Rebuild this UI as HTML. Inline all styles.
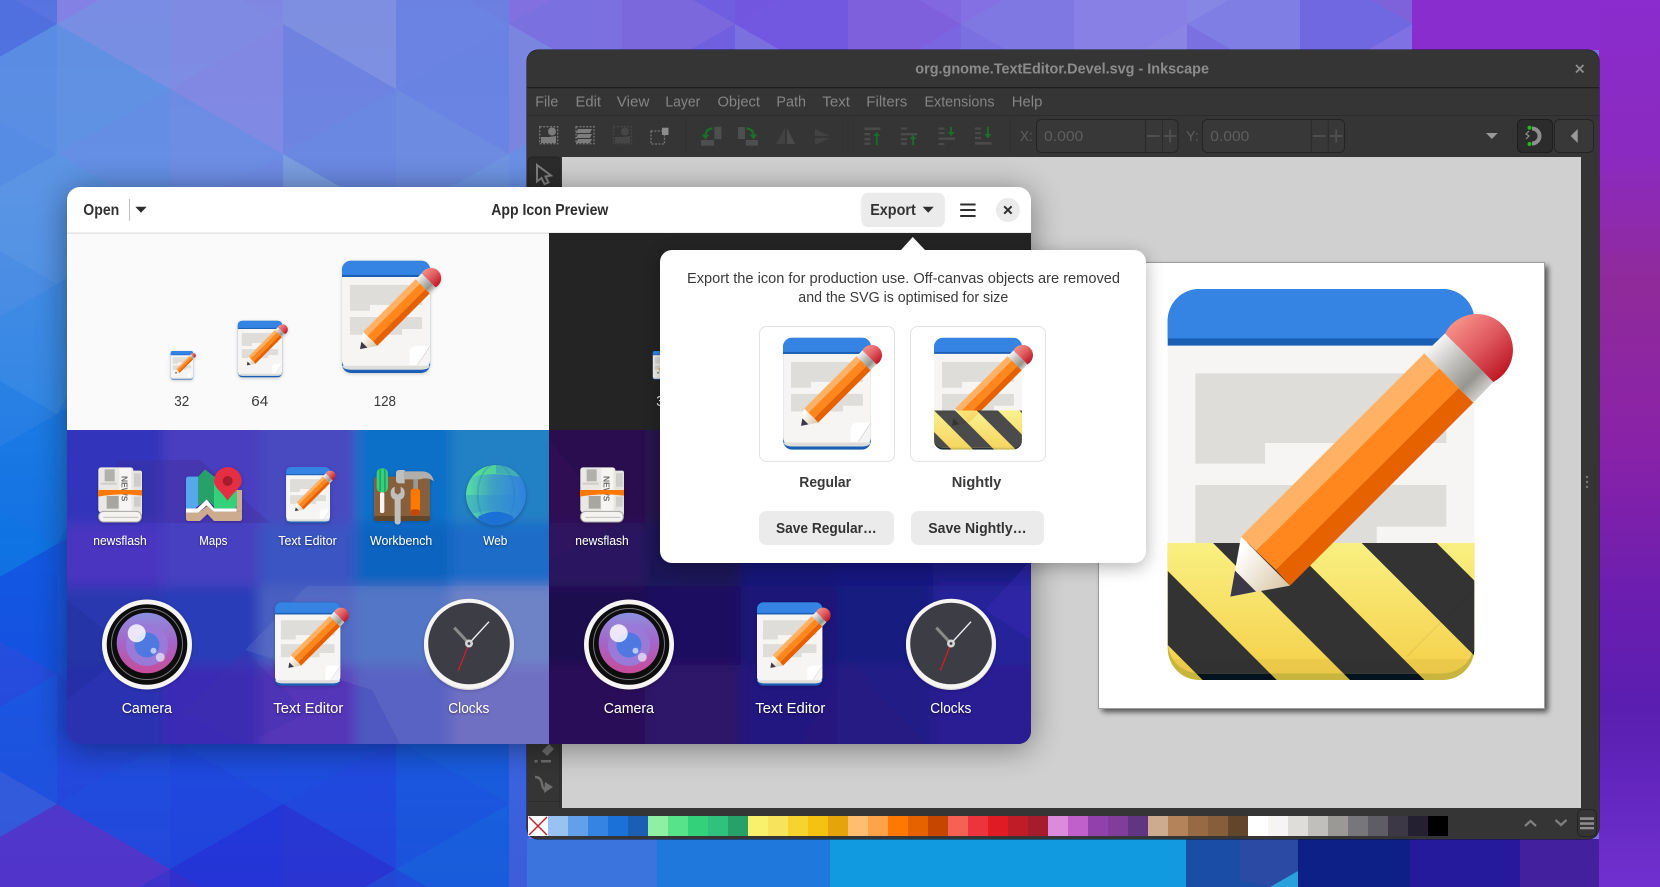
<!DOCTYPE html>
<html><head><meta charset="utf-8"><title>App Icon Preview</title>
<style>
html,body{margin:0;padding:0;width:1660px;height:887px;overflow:hidden;background:#3a60d8}
svg{display:block}
text{font-family:"Liberation Sans",sans-serif}
</style></head><body>
<svg xmlns="http://www.w3.org/2000/svg" width="1660" height="887" viewBox="0 0 1660 887">
<defs>
<filter id="b12" filterUnits="userSpaceOnUse" x="0" y="380" width="1100" height="420"><feGaussianBlur stdDeviation="6"/></filter>
<filter id="sh" x="-20%" y="-20%" width="140%" height="140%"><feGaussianBlur stdDeviation="16"/></filter>
<filter id="sh2" x="-20%" y="-20%" width="140%" height="140%"><feGaussianBlur stdDeviation="9"/></filter>
<filter id="pgs" x="-5%" y="-5%" width="110%" height="110%"><feGaussianBlur stdDeviation="3"/></filter>
<filter id="ts" x="-20%" y="-20%" width="140%" height="140%"><feDropShadow dx="0" dy="1" stdDeviation="1" flood-color="#000" flood-opacity=".45"/></filter>
<filter id="is" x="-20%" y="-20%" width="140%" height="140%"><feDropShadow dx="0" dy="1" stdDeviation="1.5" flood-color="#000" flood-opacity=".2"/></filter>
<linearGradient id="lb" x1="0" y1="0" x2="0" y2="1"><stop offset="0" stop-color="#6f84e2"/><stop offset=".2" stop-color="#6a90e4"/><stop offset=".45" stop-color="#2a82e4"/><stop offset=".6" stop-color="#1668e2"/><stop offset=".8" stop-color="#1f50e0"/><stop offset="1" stop-color="#2a3cd4"/></linearGradient>
<linearGradient id="yel" x1="0" y1="849" x2="0" y2="1240" gradientUnits="userSpaceOnUse"><stop offset="0" stop-color="#f9f082"/><stop offset="1" stop-color="#f5d04a"/></linearGradient>
<linearGradient id="era" x1="1075" y1="170" x2="1235" y2="340" gradientUnits="userSpaceOnUse"><stop offset="0" stop-color="#fb9c90"/><stop offset=".55" stop-color="#e05a60"/><stop offset="1" stop-color="#c01c28"/></linearGradient>
<linearGradient id="fer" x1="1034" y1="250" x2="1180" y2="397" gradientUnits="userSpaceOnUse"><stop offset="0" stop-color="#f6f5f4"/><stop offset=".4" stop-color="#c0bfbc"/><stop offset=".75" stop-color="#96958f"/><stop offset="1" stop-color="#d0cfcc"/></linearGradient>
<linearGradient id="wood" x1="445" y1="880" x2="590" y2="990" gradientUnits="userSpaceOnUse"><stop offset="0" stop-color="#fff"/><stop offset="1" stop-color="#d8c6a4"/></linearGradient>
<linearGradient id="rs" x1="0" y1="0" x2="0" y2="1"><stop offset="0" stop-color="#8a2cce"/><stop offset=".18" stop-color="#8b2abf"/><stop offset=".32" stop-color="#902a9a"/><stop offset=".5" stop-color="#8a22a8"/><stop offset=".68" stop-color="#6a1eb0"/><stop offset=".8" stop-color="#5a1eb0"/><stop offset="1" stop-color="#7030d0"/></linearGradient>
<linearGradient id="lens" x1="0" y1="0" x2="0" y2="1"><stop offset="0" stop-color="#8c8ee0"/><stop offset=".5" stop-color="#a565c8"/><stop offset="1" stop-color="#c84c98"/></linearGradient>
<linearGradient id="glob" x1="0" y1="0" x2="1" y2="0"><stop offset="0" stop-color="#57e0a0"/><stop offset=".45" stop-color="#3fa0c4"/><stop offset="1" stop-color="#3080e0"/></linearGradient>
<clipPath id="outerC"><path d="M233 849H1153V1165A95 95 0 0 1 1058 1260H328A95 95 0 0 1 233 1165Z"/></clipPath>
<clipPath id="innerC"><path d="M233 849H1153V1145A95 95 0 0 1 1058 1240H328A95 95 0 0 1 233 1145Z"/></clipPath>
<clipPath id="appC"><rect x="67" y="187" width="964" height="557" rx="13"/></clipPath>
<clipPath id="inkC"><rect x="527" y="50" width="1072" height="789" rx="11"/></clipPath>
<clipPath id="gl"><circle cx="1278" cy="165" r="90"/></clipPath>
<clipPath id="panL"><rect x="67" y="430" width="482" height="314"/></clipPath>
<clipPath id="panD"><rect x="549" y="430" width="482" height="314"/></clipPath>

<g id="pencil">
<polygon points="453,830 600,977 421,1010" fill="url(#wood)"/>
<polygon points="421,1010 435,932 498,995" fill="#3d3846"/>
<polygon points="453,830 1003,280 1048,325 498,873" fill="#ffb165"/>
<polygon points="498,873 1048,325 1106,384 558,930" fill="#ff871d"/>
<polygon points="558,930 1106,384 1150,428 600,977" fill="#e66100"/>
<polygon points="1003,280 1065,220 1210,366 1150,428" fill="url(#fer)"/>
<path d="M1065 220A108 108 0 1 1 1210 366Z" fill="url(#era)"/>
</g>
<g id="docTop">
<path d="M233 257V182A95 95 0 0 1 328 87H1058A95 95 0 0 1 1153 182V257Z" fill="#1a5fb4"/>
<path d="M233 235V182A95 95 0 0 1 328 87H1058A95 95 0 0 1 1153 182V235Z" fill="#3584e4"/>
</g>
<g id="greys" fill="#deddda">
<path d="M316 340H1069V549H525V611H316Z"/>
<path d="M316 675H1069V800H860V860H316Z"/>
</g>
<g id="docR">
<rect x="233" y="87" width="920" height="1173" rx="95" fill="#1a5fb4"/>
<path d="M233 257H1153V1130A95 95 0 0 1 1058 1225H328A95 95 0 0 1 233 1130Z" fill="#f6f5f4"/>
<path d="M236 1184H1150Q1140 1225 1058 1225H328Q246 1225 236 1184Z" fill="#deddda"/>
<use href="#docTop"/>
<use href="#greys"/>
<path d="M1153 977H1020Q940 977 940 1060V1177H1020Z" fill="#fff"/>
<path d="M1153 977L1020 1177" stroke="#cfcecb" stroke-width="7" fill="none"/>
<use href="#pencil"/>
</g>
<g id="stripesBottom">
<path d="M233 849H1153V1165A95 95 0 0 1 1058 1260H328A95 95 0 0 1 233 1165Z" fill="#c8b540"/>
<g clip-path="url(#outerC)" fill="#02121f">
<polygon points="-73,849 149,849 560,1260 338,1260"/><polygon points="369,849 592,849 1003,1260 780,1260"/><polygon points="815,849 1040,849 1451,1260 1226,1260"/>
</g>
<path d="M233 849H1153V1145A95 95 0 0 1 1058 1240H328A95 95 0 0 1 233 1145Z" fill="url(#yel)"/>
<g clip-path="url(#innerC)" fill="#333">
<polygon points="-73,849 149,849 560,1260 338,1260"/><polygon points="369,849 592,849 1003,1260 780,1260"/><polygon points="815,849 1040,849 1451,1260 1226,1260"/>
</g>
<rect x="233" y="1197" width="920" height="43" fill="#000" opacity=".04" clip-path="url(#innerC)"/>
</g>
<g id="stripesSmall">
<path d="M233 849H1153V1165A95 95 0 0 1 1058 1260H328A95 95 0 0 1 233 1165Z" fill="#c8b540"/>
<g clip-path="url(#outerC)" fill="#02121f">
<polygon points="-213,849 6,849 417,1260 198,1260"/><polygon points="233,849 452,849 863,1260 644,1260"/><polygon points="679,849 900,849 1311,1260 1090,1260"/><polygon points="1125,849 1346,849 1757,1260 1536,1260"/>
</g>
<path d="M233 849H1153V1145A95 95 0 0 1 1058 1240H328A95 95 0 0 1 233 1145Z" fill="url(#yel)"/>
<g clip-path="url(#innerC)" fill="#333">
<polygon points="-213,849 6,849 417,1260 198,1260"/><polygon points="233,849 452,849 863,1260 644,1260"/><polygon points="679,849 900,849 1311,1260 1090,1260"/><polygon points="1125,849 1346,849 1757,1260 1536,1260"/>
</g>
</g>
<g id="docNbig">
<rect x="233" y="180" width="920" height="700" fill="#f6f5f4"/>
<use href="#docTop"/>
<use href="#greys"/>
<use href="#stripesBottom"/>
<path d="M1153 985L950 1190" stroke="#000" stroke-opacity=".06" stroke-width="4" fill="none"/>
<use href="#pencil"/>
</g>
<g id="docNsmall">
<rect x="233" y="180" width="920" height="700" fill="#f6f5f4"/>
<use href="#docTop"/>
<use href="#greys"/>
<use href="#pencil"/>
<g opacity=".88"><use href="#stripesSmall"/></g>
</g>

<g id="newsflash">
<rect x="170" y="92" width="46" height="135" rx="6" fill="#e4e3df"/>
<rect x="85" y="82" width="105" height="135" rx="8" fill="#e9e8e4"/>
<rect x="148" y="84" width="36" height="130" fill="#f6f5f4"/>
<rect x="104" y="88" width="30" height="36" fill="#b2b0aa"/>
<rect x="92" y="128" width="48" height="6" fill="#cfcdc8"/>
<rect x="110" y="168" width="36" height="38" fill="#a8a6a0"/>
<rect x="192" y="100" width="20" height="40" fill="#cfcdc8"/>
<rect x="192" y="170" width="20" height="30" fill="#cfcdc8"/>
<text transform="translate(155,108) rotate(90)" font-size="24" font-weight="700" fill="#6e6d6a" textLength="76" lengthAdjust="spacingAndGlyphs">NEWS</text>
<path d="M84 150H216V167Q150 158 84 170Z" fill="#ff7800"/>
<rect x="86" y="214" width="128" height="32" rx="15" fill="#f4f3f0" stroke="#a9a7a2" stroke-width="3"/>
<path d="M100 232H205" stroke="#c0bfbc" stroke-width="3"/>
</g>
<g id="cam">
<circle cx="147" cy="644.5" r="45" fill="#f6f5f4"/>
<circle cx="147" cy="644.5" r="40.3" fill="#0c0c0e"/>
<circle cx="147" cy="644" r="35.5" fill="none" stroke="#77767b" stroke-width="1"/>
<circle cx="147" cy="643" r="30.3" fill="url(#lens)"/>
<circle cx="147" cy="645" r="21" fill="#9a7ad8"/>
<circle cx="147" cy="645" r="12.5" fill="#4f78e0"/>
<circle cx="136.7" cy="633.3" r="9" fill="#fff" opacity=".82"/>
<circle cx="153.5" cy="650.7" r="3" fill="#fff" opacity=".6"/>
<circle cx="160.3" cy="657.3" r="4.5" fill="#fff" opacity=".6"/>
</g>
<g id="clk">
<circle cx="469" cy="645" r="45" fill="#deddda"/>
<circle cx="469" cy="643.8" r="45" fill="#f6f5f4"/>
<circle cx="469" cy="643.5" r="40.8" fill="#3d3c44"/>
<path d="M469 643.5L454.3 627.7" stroke="#8a8a8a" stroke-width="3"/>
<path d="M469 643.5L489 621.7" stroke="#f0f0f0" stroke-width="1.4"/>
<path d="M469 643.5L458.3 670.7" stroke="#e01b24" stroke-width="1.2"/>
<circle cx="469" cy="643.5" r="4" fill="#d5d5d5"/><circle cx="469" cy="643.5" r="1.4" fill="#3d3c44"/>
</g>
</defs>

<!-- WALLPAPER -->
<rect width="1660" height="887" fill="#7a70e0"/>
<rect x="0" y="0" width="529" height="887" fill="url(#lb)"/>
<g shape-rendering="crispEdges" opacity=".62">
<!-- left column -->
<polygon points="57,24 57,-106 -56,-41" fill="#4a6ae0"/>
<polygon points="57,24 -56,-41 -56,89" fill="#3f64e0"/>
<polygon points="57,24 -56,89 57,154" fill="#5090e4"/>
<polygon points="57,154 -56,89 -56,219" fill="#4a8ce4"/>
<polygon points="57,154 -56,219 57,284" fill="#5598e4"/>
<polygon points="57,284 -56,219 -56,349" fill="#4a90e4"/>
<polygon points="57,284 -56,349 57,414" fill="#3a8ce4"/>
<polygon points="57,414 -56,349 -56,479" fill="#2880e4"/>
<polygon points="57,414 -56,479 57,544" fill="#1478e4"/>
<polygon points="57,544 -56,479 -56,609" fill="#0c7ce4"/>
<polygon points="57,544 -56,609 57,674" fill="#1050e2"/>
<polygon points="57,674 -56,609 -56,739" fill="#2a48dc"/>
<polygon points="57,674 -56,739 57,804" fill="#1a58e0"/>
<polygon points="57,804 -56,739 -56,869" fill="#3a68dc"/>
<polygon points="57,804 -56,869 -56,887 57,887" fill="#6a30c4"/>
<!-- 57-170 -->
<polygon points="57,24 57,-106 170,-41" fill="#9080e4"/>
<polygon points="57,24 170,-41 170,89" fill="#7f93e4"/>
<polygon points="57,24 170,89 57,154" fill="#5a96e4"/>
<polygon points="57,154 170,89 170,219" fill="#6090e4"/>
<polygon points="57,154 170,219 57,284" fill="#5598e4"/>
<polygon points="57,284 170,219 57,414" fill="#3f8ee4"/>
<polygon points="57,414 170,349 57,544" fill="#1a7ae4"/>
<polygon points="57,544 170,479 57,674" fill="#1a55e2"/>
<polygon points="57,674 170,609 170,739" fill="#2050e0"/>
<polygon points="57,674 170,739 57,804" fill="#2448dc"/>
<polygon points="57,804 170,739 170,869" fill="#1f4fdf"/>
<polygon points="57,804 170,869 138.700,887 57,887" fill="#6a30c4"/>
<polygon points="138.700,887 170,869 170,887" fill="#4a2fc8"/>
<!-- 170-283 -->
<polygon points="283,24 170,-41 283,-106" fill="#8a8ae4"/>
<polygon points="170,-41 283,24 170,89" fill="#8a8ee4"/>
<polygon points="170,89 283,24 283,154" fill="#8d88e4"/>
<polygon points="170,89 283,154 170,219" fill="#6f8ce4"/>
<polygon points="170,219 283,154 283,284" fill="#7088e4"/>
<polygon points="170,739 283,674 283,804" fill="#1c50e0"/>
<polygon points="170,739 283,804 170,869" fill="#1d48e0"/>
<polygon points="170,869 283,804 283,887 201,887" fill="#2230d8"/>
<polygon points="170,869 201,887 170,887" fill="#3828c8"/>
<!-- 283-396 -->
<polygon points="283,-106 396,-41 283,24" fill="#8896e2"/>
<polygon points="283,24 396,-41 396,89" fill="#8895e0"/>
<polygon points="283,24 396,89 283,154" fill="#7080e0"/>
<polygon points="283,154 396,89 396,219" fill="#6a85e0"/>
<polygon points="283,154 396,219 283,284" fill="#85a6e0"/>
<polygon points="283,674 396,739 283,804" fill="#1a50e0"/>
<polygon points="283,804 396,739 396,869" fill="#1f4ae0"/>
<polygon points="283,804 396,869 365,887 283,887" fill="#2a30d0"/>
<polygon points="365,887 396,869 396,887" fill="#2050d8"/>
<!-- 396-509 -->
<polygon points="396,-41 509,-106 509,24" fill="#6a7de0"/>
<polygon points="396,-41 509,24 396,89" fill="#6a82e4"/>
<polygon points="396,89 509,24 509,154" fill="#6880e2"/>
<polygon points="396,89 509,154 396,219" fill="#6f8be0"/>
<polygon points="396,219 509,154 509,284" fill="#7298e2"/>
<polygon points="396,739 509,674 509,804" fill="#1468e0"/>
<polygon points="396,739 509,804 396,869" fill="#1560e0"/>
<polygon points="396,869 509,804 509,887 427,887" fill="#1070e0"/>
<polygon points="396,869 427,887 396,887" fill="#1a55e0"/>
<rect x="509" y="674" width="20" height="213" fill="#4a72e0"/>
</g>
<g shape-rendering="crispEdges">
<!-- top band right -->
<polygon points="509,24 509,-106 622,-41" fill="#8070e0"/>
<polygon points="509,24 622,-41 622,89" fill="#7a70e0"/>
<polygon points="509,24 622,89 509,154" fill="#7a85e0"/>
<polygon points="735,24 622,-41 735,-106" fill="#6f5fe0"/>
<polygon points="622,-41 735,24 622,89" fill="#7a68dc"/>
<polygon points="622,89 735,24 735,154" fill="#7060e0"/>
<polygon points="735,-106 848,-41 735,24" fill="#7256e0"/>
<polygon points="735,24 848,-41 848,89" fill="#7258e0"/>
<polygon points="848,-41 961,-106 961,24" fill="#8268e0"/>
<polygon points="848,-41 961,24 848,89" fill="#7f60dc"/>
<polygon points="848,89 961,24 961,154" fill="#7a66e0"/>
<polygon points="961,-106 1074,-41 961,24" fill="#8470e2"/>
<polygon points="961,24 1074,-41 1074,89" fill="#7f78e2"/>
<polygon points="1074,-41 1187,-106 1187,24" fill="#8880e4"/>
<polygon points="1074,-41 1187,24 1074,89" fill="#8880e4"/>
<polygon points="1074,89 1187,24 1187,154" fill="#8a85e4"/>
<polygon points="1187,-106 1300,-41 1187,24" fill="#8686e4"/>
<polygon points="1187,24 1300,-41 1300,89" fill="#7e7ee4"/>
<polygon points="1300,-41 1413,-106 1413,24" fill="#7d62dc"/>
<polygon points="1300,-41 1413,24 1300,89" fill="#7068e0"/>
<polygon points="1300,89 1413,24 1413,154" fill="#7f70e4"/>
</g>
<rect x="1412" y="0" width="248" height="50" fill="#8a2dce"/>
<rect x="1599" y="0" width="61" height="887" fill="url(#rs)"/>
<rect x="527" y="839" width="303" height="48" fill="#1f78dc"/>
<rect x="527" y="839" width="130" height="48" fill="#3a74dc"/>
<rect x="830" y="839" width="356" height="48" fill="#119ae0"/>
<polygon points="1186,839 1300,839 1300,887 1186,887" fill="#1a4ea6"/>
<polygon points="1240,839 1300,839 1300,870 1270,887 1240,880" fill="#2a4aa4"/>
<rect x="1298" y="839" width="112" height="48" fill="#0d2088"/>
<rect x="1410" y="839" width="110" height="48" fill="#261a9c"/>
<rect x="1520" y="839" width="79" height="48" fill="#42209e"/>
<polygon points="1270,887 1298,871 1298,887" fill="#2aa0dc"/>

<!-- INKSCAPE WINDOW -->
<rect x="526.500" y="49.500" width="1073" height="790" rx="11.500" fill="#14141f"/>
<g clip-path="url(#inkC)">
<rect x="527" y="50" width="1072" height="789" fill="#353535"/>
<rect x="527" y="87" width="1072" height="1.300" fill="#1f1f1f"/>
<rect x="527" y="115" width="1072" height="1" fill="#2c2c2c"/>
<rect x="562" y="157" width="1019" height="651" fill="#d0d0d0"/>
<rect x="528" y="157" width="32" height="35" rx="4" fill="#2c2c2c" stroke="#222"/>
<rect x="559.300" y="157" width="1" height="651" fill="#2b2b2b"/>
<rect x="528" y="801" width="32" height="1" fill="#2b2b2b"/>
<!-- page -->
<rect x="1102" y="266" width="446" height="446" fill="#000" opacity=".62" filter="url(#pgs)"/>
<rect x="1098.500" y="262.500" width="446" height="446" fill="#fff" stroke="#9c9c9c" stroke-width="1"/>
<svg x="1167.700" y="289" width="346" height="391" viewBox="233 87 1038 1173" overflow="visible"><use href="#docNbig"/></svg>
</g>
<g>
<text x="915.300" y="73.500" font-size="15" font-weight="700" textLength="293.700" lengthAdjust="spacingAndGlyphs" fill="#8c8c8c">org.gnome.TextEditor.Devel.svg - Inkscape</text>
<text x="535.300" y="106.700" font-size="15" textLength="23" lengthAdjust="spacingAndGlyphs" fill="#858585">File</text>
<text x="575.500" y="106.700" font-size="15" textLength="25.500" lengthAdjust="spacingAndGlyphs" fill="#858585">Edit</text>
<text x="616.800" y="106.700" font-size="15" textLength="32.600" lengthAdjust="spacingAndGlyphs" fill="#858585">View</text>
<text x="665.400" y="106.700" font-size="15" textLength="34.900" lengthAdjust="spacingAndGlyphs" fill="#858585">Layer</text>
<text x="717.500" y="106.700" font-size="15" textLength="42.500" lengthAdjust="spacingAndGlyphs" fill="#858585">Object</text>
<text x="776.400" y="106.700" font-size="15" textLength="29.600" lengthAdjust="spacingAndGlyphs" fill="#858585">Path</text>
<text x="822.300" y="106.700" font-size="15" textLength="27.700" lengthAdjust="spacingAndGlyphs" fill="#858585">Text</text>
<text x="866.300" y="106.700" font-size="15" textLength="41" lengthAdjust="spacingAndGlyphs" fill="#858585">Filters</text>
<text x="924.500" y="106.700" font-size="15" textLength="70" lengthAdjust="spacingAndGlyphs" fill="#858585">Extensions</text>
<text x="1011.800" y="106.700" font-size="15" textLength="30.600" lengthAdjust="spacingAndGlyphs" fill="#858585">Help</text>
</g>
<path d="M1576 65l7.500 7.500M1583.500 65l-7.500 7.500" stroke="#909090" stroke-width="1.800"/>
<!-- toolbar separators -->
<g fill="#2f2f2f"><rect x="685.500" y="118" width="1" height="35"/><rect x="847.500" y="118" width="1" height="35"/><rect x="1009.500" y="118" width="1" height="35"/></g>
<!-- toolbar icons -->
<g fill="none" stroke="#757575" stroke-width="1.300" stroke-dasharray="2 1.400">
<rect x="539.700" y="126.700" width="18" height="17"/><rect x="576" y="126.700" width="18" height="17"/>
<rect x="613.500" y="126.700" width="18" height="17" stroke="#454545"/><rect x="651" y="131" width="13.500" height="13"/>
</g>
<g fill="#7c7c7c">
<circle cx="552" cy="131.500" r="4"/><path d="M541 143v-6h8l7-1v7z"/>
<path d="M578 129h14l-2 4h-14zM578 134h14l-2 4h-14zM578 139h14l-2 4h-14z"/>
<rect x="662" y="127.700" width="6.500" height="7.300" fill="#8c8c8c"/>
</g>
<g fill="#464646"><circle cx="625" cy="131.500" r="4"/><path d="M615 143v-6h8l7-1v7z"/></g>
<g fill="#4e4e4e"><rect x="714.400" y="126.700" width="7" height="12.500"/><rect x="701" y="140" width="13" height="5.700"/><rect x="738" y="127" width="7" height="12"/><rect x="745.800" y="140" width="12.200" height="5.700"/></g>
<g fill="none" stroke="#1a6f28" stroke-width="2.200"><path d="M712.500 128.500Q705.500 129 705.500 136"/><path d="M746.500 128.500Q753.500 129 753.500 136"/></g>
<g fill="#1a6f28"><path d="M701.500 134.500h8l-4 5z"/><path d="M749.500 134.500h8l-4 5z"/></g>
<g fill="#424242"><path d="M785 128v16h-9z"/><path d="M787 128l8 16h-8z" fill="#4a4a4a"/><path d="M815 129l15 7h-15zM815 138h15l-15 7z"/></g>
<g fill="#4a4a4a">
<rect x="864.400" y="127.500" width="16" height="2.600"/><rect x="864.400" y="133" width="6" height="2.400"/><rect x="864.400" y="138" width="6" height="2.400"/><rect x="864.400" y="142.500" width="6" height="2.400"/>
<rect x="901" y="133" width="16" height="2.400"/><rect x="901" y="138" width="6" height="2.400"/><rect x="901" y="142.500" width="6" height="2.400"/><rect x="901" y="127.500" width="6" height="2.200"/>
<rect x="938.500" y="137.500" width="16.500" height="2.400"/><rect x="938.500" y="127.500" width="6" height="2.200"/><rect x="938.500" y="132" width="6" height="2.200"/><rect x="938.500" y="143" width="6" height="2.200"/>
<rect x="975" y="142" width="16.500" height="2.600"/><rect x="975" y="127.500" width="6" height="2.200"/><rect x="975" y="132" width="6" height="2.200"/><rect x="975" y="137" width="6" height="2.200"/>
</g>
<g fill="#1a6f28">
<path d="M875.800 145v-9h-2.600l3.500-4 3.500 4h-2.600v9z"/><path d="M912.200 145v-6h-2.600l3.500-4 3.500 4h-2.600v6z"/>
<path d="M950.200 127v5h-2.600l3.500 4 3.500-4h-2.600v-5z"/><path d="M987 127v7h-2.600l3.500 4.500 3.500-4.500h-2.600v-7z"/>
</g>
<text x="1020" y="141" font-size="15" textLength="12.800" lengthAdjust="spacingAndGlyphs" fill="#5e5e5e">X:</text>
<text x="1186" y="141" font-size="15" textLength="12.700" lengthAdjust="spacingAndGlyphs" fill="#5e5e5e">Y:</text>
<g fill="#383838" stroke="#242424">
<rect x="1036.500" y="119.500" width="141.500" height="33" rx="5"/><rect x="1202.500" y="119.500" width="142" height="33" rx="5"/>
</g>
<g fill="#2a2a2a"><rect x="1145" y="120" width="1" height="32"/><rect x="1162" y="120" width="1" height="32"/><rect x="1310.700" y="120" width="1" height="32"/><rect x="1327.700" y="120" width="1" height="32"/></g>
<text x="1044" y="141" font-size="15" textLength="39.300" lengthAdjust="spacingAndGlyphs" fill="#5e5e5e">0.000</text>
<text x="1210.300" y="141" font-size="15" textLength="39" lengthAdjust="spacingAndGlyphs" fill="#5e5e5e">0.000</text>
<g stroke="#4f4f4f" stroke-width="2"><path d="M1147 136h12.500M1164 136h12.500M1170.200 129.500v13M1313 136h12.500M1330 136h12.500M1336.200 129.500v13"/></g>
<path d="M1486 133h11.700l-5.850 6z" fill="#9a9a9a"/>
<rect x="1517.500" y="119.500" width="35" height="33" rx="5" fill="#2c2c2c" stroke="#1e1e1e"/>
<rect x="1554.500" y="119.500" width="39" height="33" rx="5" fill="#383838" stroke="#242424"/>
<path d="M1532 128.500a7.500 7.500 0 0 1 0 15" fill="none" stroke="#8e8e8e" stroke-width="4"/>
<circle cx="1529.500" cy="127.700" r="2" fill="#16c416"/><circle cx="1529.500" cy="144" r="2" fill="#16c416"/>
<path d="M1529 131l-3 3 3 2-3 3" fill="none" stroke="#8e8e8e" stroke-width="1.200"/>
<path d="M1577.700 129v14l-7-7z" fill="#9a9a9a"/>
<!-- left tools -->
<path d="M537 165l14 10.500-5.500 1 3 6-4 1.500-3-6-4.500 3.500z" fill="none" stroke="#7e7e7e" stroke-width="2"/>
<path d="M542 751l7-7 5 5-7 7z" fill="#6e6e6e"/><rect x="534.500" y="760" width="3" height="2.500" fill="#6e6e6e"/><rect x="541" y="760" width="10" height="2.500" fill="#6e6e6e"/>
<path d="M535 777q6 0 7 7t5 5" fill="none" stroke="#6e6e6e" stroke-width="2.400"/><path d="M544 793l9-6-8-5z" fill="#6e6e6e"/>
<!-- palette -->
<g shape-rendering="crispEdges">
<rect x="528" y="816" width="20" height="20" fill="#fff"/>
<rect x="548" y="816" width="20" height="20" fill="#99c1f1"/><rect x="568" y="816" width="20" height="20" fill="#62a0ea"/><rect x="588" y="816" width="20" height="20" fill="#3584e4"/><rect x="608" y="816" width="20" height="20" fill="#1c71d8"/><rect x="628" y="816" width="20" height="20" fill="#1a5fb4"/>
<rect x="648" y="816" width="20" height="20" fill="#8ff0a4"/><rect x="668" y="816" width="20" height="20" fill="#57e389"/><rect x="688" y="816" width="20" height="20" fill="#33d17a"/><rect x="708" y="816" width="20" height="20" fill="#2ec27e"/><rect x="728" y="816" width="20" height="20" fill="#26a269"/>
<rect x="748" y="816" width="20" height="20" fill="#f9f06b"/><rect x="768" y="816" width="20" height="20" fill="#f8e45c"/><rect x="788" y="816" width="20" height="20" fill="#f6d32d"/><rect x="808" y="816" width="20" height="20" fill="#f5c211"/><rect x="828" y="816" width="20" height="20" fill="#e5a50a"/>
<rect x="848" y="816" width="20" height="20" fill="#ffbe6f"/><rect x="868" y="816" width="20" height="20" fill="#ffa348"/><rect x="888" y="816" width="20" height="20" fill="#ff7800"/><rect x="908" y="816" width="20" height="20" fill="#e66100"/><rect x="928" y="816" width="20" height="20" fill="#c64600"/>
<rect x="948" y="816" width="20" height="20" fill="#f66151"/><rect x="968" y="816" width="20" height="20" fill="#ed333b"/><rect x="988" y="816" width="20" height="20" fill="#e01b24"/><rect x="1008" y="816" width="20" height="20" fill="#c01c28"/><rect x="1028" y="816" width="20" height="20" fill="#a51d2d"/>
<rect x="1048" y="816" width="20" height="20" fill="#dc8add"/><rect x="1068" y="816" width="20" height="20" fill="#c061cb"/><rect x="1088" y="816" width="20" height="20" fill="#9141ac"/><rect x="1108" y="816" width="20" height="20" fill="#813d9c"/><rect x="1128" y="816" width="20" height="20" fill="#613583"/>
<rect x="1148" y="816" width="20" height="20" fill="#cdab8f"/><rect x="1168" y="816" width="20" height="20" fill="#b5835a"/><rect x="1188" y="816" width="20" height="20" fill="#986a44"/><rect x="1208" y="816" width="20" height="20" fill="#865e3c"/><rect x="1228" y="816" width="20" height="20" fill="#63452c"/>
<rect x="1248" y="816" width="20" height="20" fill="#fff"/><rect x="1268" y="816" width="20" height="20" fill="#f6f5f4"/><rect x="1288" y="816" width="20" height="20" fill="#deddda"/><rect x="1308" y="816" width="20" height="20" fill="#c0bfbc"/><rect x="1328" y="816" width="20" height="20" fill="#9a9996"/>
<rect x="1348" y="816" width="20" height="20" fill="#77767b"/><rect x="1368" y="816" width="20" height="20" fill="#5e5c64"/><rect x="1388" y="816" width="20" height="20" fill="#3d3846"/><rect x="1408" y="816" width="20" height="20" fill="#241f31"/><rect x="1428" y="816" width="20" height="20" fill="#000"/>
</g>
<path d="M529 817l18 18M547 817l-18 18" stroke="#c01c28" stroke-width="1.400"/>
<path d="M1525 826l5.500-5 5.500 5M1555.500 820l5.500 5 5.500-5" fill="none" stroke="#808080" stroke-width="2.200"/>
<rect x="1577.500" y="809.500" width="19" height="27" rx="5" fill="#353535" stroke="#242424"/>
<g fill="#8f8f8f"><rect x="1580" y="817.300" width="14" height="2.600"/><rect x="1580" y="822.300" width="14" height="2.500"/><rect x="1580" y="827" width="14" height="2.300"/></g>
<g fill="#777"><circle cx="1587" cy="477" r="1.200"/><circle cx="1587" cy="482" r="1.200"/><circle cx="1587" cy="487" r="1.200"/></g>

<!-- APP WINDOW -->
<rect x="67" y="191" width="964" height="557" rx="13" fill="#000" opacity=".42" filter="url(#sh)"/>
<g clip-path="url(#appC)">
<rect x="67" y="187" width="964" height="46" fill="#fff"/>
<rect x="67" y="233" width="482" height="197" fill="#fafafa"/>
<rect x="67" y="232.500" width="964" height="1.200" fill="#dcdcdc"/>
<rect x="549" y="233" width="482" height="197" fill="#242424"/>
<g clip-path="url(#panL)">
<rect x="67" y="430" width="482" height="314" fill="#3a50c0"/>
<g filter="url(#b12)">
<rect x="30" y="400" width="133" height="123" fill="#3034bc"/><rect x="163" y="400" width="96" height="123" fill="#4a3ec0"/><rect x="259" y="400" width="96" height="123" fill="#4a48c0"/><rect x="355" y="400" width="96" height="123" fill="#1070c8"/><rect x="451" y="400" width="130" height="123" fill="#2080c4"/>
<rect x="30" y="523" width="133" height="63" fill="#4a36c0"/><rect x="163" y="523" width="96" height="63" fill="#4640c0"/><rect x="259" y="523" width="96" height="63" fill="#3a55c2"/><rect x="355" y="523" width="96" height="63" fill="#0e64c0"/><rect x="451" y="523" width="130" height="63" fill="#1a6cc8"/>
<rect x="30" y="586" width="133" height="79" fill="#2c38b0"/><rect x="163" y="586" width="96" height="79" fill="#2c3cb8"/><rect x="259" y="586" width="96" height="79" fill="#4a60c0"/><rect x="355" y="586" width="96" height="79" fill="#4a70c4"/><rect x="451" y="586" width="130" height="79" fill="#6a80c4"/>
<rect x="30" y="665" width="133" height="110" fill="#2b30b2"/><rect x="163" y="665" width="96" height="110" fill="#3a2cb4"/><rect x="259" y="665" width="96" height="110" fill="#5535b8"/><rect x="355" y="665" width="96" height="110" fill="#5058c0"/><rect x="451" y="665" width="130" height="110" fill="#6c68c0"/>
</g>
<polygon points="307,586 549,586 549,744 400,744 372,690 245,650" fill="#8090d0" opacity=".2"/>
<polygon points="115,460 200,460 270,523 115,523" fill="#402c90" opacity=".3"/>
<polygon points="245,650 307,713 245,744 185,713" fill="#4030b0" opacity=".35"/>
<polygon points="67,600 130,650 67,700" fill="#1a2a90" opacity=".3"/>
</g>
<g clip-path="url(#panD)">
<rect x="549" y="430" width="482" height="314" fill="#1c1466"/>
<g filter="url(#b12)">
<rect x="520" y="400" width="125" height="123" fill="#2a0f50"/><rect x="645" y="400" width="96" height="123" fill="#251250"/><rect x="741" y="400" width="96" height="123" fill="#1c1a6a"/><rect x="837" y="400" width="96" height="123" fill="#181c80"/><rect x="933" y="400" width="130" height="123" fill="#1c1c80"/>
<rect x="520" y="523" width="125" height="63" fill="#2a1260"/><rect x="645" y="523" width="96" height="63" fill="#1f1258"/><rect x="741" y="523" width="96" height="63" fill="#16167a"/><rect x="837" y="523" width="96" height="63" fill="#141880"/><rect x="933" y="523" width="130" height="63" fill="#1c1c88"/>
<rect x="520" y="586" width="125" height="79" fill="#1e0e50"/><rect x="645" y="586" width="96" height="79" fill="#1c1060"/><rect x="741" y="586" width="96" height="79" fill="#1a1878"/><rect x="837" y="586" width="96" height="79" fill="#161a80"/><rect x="933" y="586" width="130" height="79" fill="#26209a"/>
<rect x="520" y="665" width="125" height="110" fill="#2a1058"/><rect x="645" y="665" width="96" height="110" fill="#2e1268"/><rect x="741" y="665" width="96" height="110" fill="#241880"/><rect x="837" y="665" width="96" height="110" fill="#241a86"/><rect x="933" y="665" width="130" height="110" fill="#2a1c92"/>
</g>
<polygon points="549,440 620,523 549,560" fill="#3a1060" opacity=".3"/>
<polygon points="850,660 925,744 800,744" fill="#4a1a70" opacity=".12"/>
<polygon points="1031,560 1031,640 985,610" fill="#3428b0" opacity=".5"/>
</g>
<!-- header -->
<text x="83.300" y="215" font-size="15.500" font-weight="700" textLength="36" lengthAdjust="spacingAndGlyphs" fill="#333">Open</text>
<rect x="129" y="199" width="1" height="21.700" fill="#c0c0c0"/>
<path d="M135.300 206.700h11.400l-5.700 6z" fill="#2e2e2e"/>
<text x="491.300" y="215" font-size="15.500" font-weight="700" textLength="117" lengthAdjust="spacingAndGlyphs" fill="#2e2e2e">App Icon Preview</text>
<rect x="861.200" y="192.700" width="83.700" height="34.300" rx="7" fill="#ebebeb"/>
<text x="870.200" y="215" font-size="15.500" font-weight="700" textLength="45.600" lengthAdjust="spacingAndGlyphs" fill="#333">Export</text>
<path d="M922.600 206.700h11.200l-5.600 6z" fill="#2e2e2e"/>
<g fill="#2e2e2e"><rect x="960.200" y="203.500" width="15.400" height="2"/><rect x="960.200" y="209" width="15.400" height="2"/><rect x="960.200" y="215" width="15.400" height="2"/></g>
<circle cx="1007.900" cy="210" r="12" fill="#ebebeb"/>
<path d="M1004.200 206.300l7.400 7.400M1011.600 206.300l-7.400 7.400" stroke="#2e2e2e" stroke-width="2"/>
<!-- size previews light -->
<g filter="url(#is)">
<svg x="170.700" y="351" width="25.300" height="28.600" viewBox="233 87 1038 1173"><use href="#docR"/></svg>
<svg x="237.700" y="320.700" width="50.300" height="56.700" viewBox="233 87 1038 1173"><use href="#docR"/></svg>
<svg x="341.700" y="260.700" width="100" height="112.300" viewBox="233 87 1038 1173"><use href="#docR"/></svg>
</g>
<text x="174.300" y="406" font-size="15" textLength="15" lengthAdjust="spacingAndGlyphs" fill="#3d3d3d">32</text>
<text x="251.300" y="406" font-size="15" textLength="17" lengthAdjust="spacingAndGlyphs" fill="#3d3d3d">64</text>
<text x="373.700" y="406" font-size="15" textLength="22.300" lengthAdjust="spacingAndGlyphs" fill="#3d3d3d">128</text>
<!-- size previews dark -->
<svg x="652.700" y="351" width="25.300" height="28.600" viewBox="233 87 1038 1173"><use href="#docR"/></svg>
<text x="656.300" y="406" font-size="15" textLength="15" lengthAdjust="spacingAndGlyphs" fill="#eee">32</text>
<!-- row 1 icons -->
<g filter="url(#is)">
<g transform="translate(70,440) scale(.33333)">
<use href="#newsflash"/>
<!-- maps -->
<path d="M348 218H385L412 198L432 215H516V235Q516 243 508 243H432L412 222L390 243H356Q348 243 348 235Z" fill="#cdab8f"/>
<path d="M348 205H382L410 178L432 205H500V215H432L410 196L385 218H348Z" fill="#fff"/>
<path d="M348 118Q348 110 356 110H385V197L375 205H348Z" fill="#55a8ec"/>
<path d="M385 110L405 88L432 110V198L410 178L385 198Z" fill="#26a269"/>
<path d="M432 110H500V196Q500 205 492 205H432Z" fill="#33d17a"/>
<path d="M500 150H516V215H500Z" fill="#cdab8f"/>
<path d="M473 182C452 152 432 142 432 123A41 41 0 0 1 515 123C515 142 494 152 473 182Z" fill="#e62d42"/>
<circle cx="473" cy="123" r="15" fill="#a51d2d"/>
<!-- workbench -->
<rect x="912" y="110" width="168" height="133" rx="10" fill="#865e3c"/>
<rect x="912" y="228" width="168" height="15" rx="6" fill="#63452c"/>
<rect x="920" y="85" width="34" height="72" rx="14" fill="#33d17a"/>
<rect x="928" y="88" width="5" height="66" fill="#26a269"/><rect x="942" y="88" width="5" height="66" fill="#26a269"/>
<rect x="930" y="157" width="13" height="62" rx="5" fill="#f6f5f4"/>
<path d="M962 160a21 21 0 0 1 12-20v18l9 6 9-6v-18a21 21 0 0 1 12 20q0 14-12 19v66a9 9 0 0 1-18 0v-66q-12-5-12-19z" fill="#c0bfbc"/>
<path d="M978 100Q978 90 988 90H1004V130H988Q978 130 978 120Z" fill="#c0bfbc"/>
<path d="M1004 94H1055Q1085 94 1092 124Q1075 110 1050 118H1004Z" fill="#b0afab"/>
<rect x="1030" y="118" width="14" height="36" fill="#9a9996"/>
<rect x="1022" y="146" width="28" height="80" rx="8" fill="#ff7800"/>
<rect x="1022" y="208" width="28" height="18" rx="8" fill="#c64600"/>
<!-- web -->
<circle cx="1278" cy="167" r="91" fill="#1a5fb4"/>
<circle cx="1278" cy="165" r="90" fill="url(#glob)"/>
<g clip-path="url(#gl)">
<path d="M1188 60H1368V115Q1278 90 1188 115Z" fill="#57e389" opacity=".75"/>
<path d="M1278 60H1368V115Q1320 100 1278 100Z" fill="#3fa8b8" opacity=".85"/>
<path d="M1188 165H1368V225Q1278 200 1188 225Z" fill="#2f8ad8" opacity=".35"/>
<path d="M1225 230Q1278 200 1330 230V270H1225Z" fill="#1c71d8"/>
<ellipse cx="1278" cy="165" rx="55" ry="92" fill="none" stroke="#2a7ab8" stroke-opacity=".35" stroke-width="5"/>
</g>
<!-- dark newsflash -->
<use href="#newsflash" x="1446"/>
</g>
<svg x="286" y="467" width="49.700" height="56" viewBox="233 87 1038 1173"><use href="#docR"/></svg>
<svg x="275" y="602.300" width="73.800" height="83.400" viewBox="233 87 1038 1173"><use href="#docR"/></svg>
<svg x="757" y="602.300" width="73.800" height="83.400" viewBox="233 87 1038 1173"><use href="#docR"/></svg>
<use href="#cam"/><use href="#cam" x="482"/>
<use href="#clk"/><use href="#clk" x="482"/>
</g>
<g filter="url(#ts)" fill="#fff">
<text x="93.300" y="545" font-size="13" textLength="53.400" lengthAdjust="spacingAndGlyphs">newsflash</text>
<text x="199.300" y="545" font-size="13" textLength="28" lengthAdjust="spacingAndGlyphs">Maps</text>
<text x="278.300" y="545" font-size="13" textLength="58.400" lengthAdjust="spacingAndGlyphs">Text Editor</text>
<text x="370" y="545" font-size="13" textLength="62.300" lengthAdjust="spacingAndGlyphs">Workbench</text>
<text x="483.300" y="545" font-size="13" textLength="24" lengthAdjust="spacingAndGlyphs">Web</text>
<text x="575.300" y="545" font-size="13" textLength="53.400" lengthAdjust="spacingAndGlyphs">newsflash</text>
<text x="121.700" y="713" font-size="15" textLength="50.300" lengthAdjust="spacingAndGlyphs">Camera</text>
<text x="273.300" y="713" font-size="15" textLength="70" lengthAdjust="spacingAndGlyphs">Text Editor</text>
<text x="448.300" y="713" font-size="15" textLength="41" lengthAdjust="spacingAndGlyphs">Clocks</text>
<text x="603.700" y="713" font-size="15" textLength="50.300" lengthAdjust="spacingAndGlyphs">Camera</text>
<text x="755.300" y="713" font-size="15" textLength="70" lengthAdjust="spacingAndGlyphs">Text Editor</text>
<text x="930.300" y="713" font-size="15" textLength="41" lengthAdjust="spacingAndGlyphs">Clocks</text>
</g>
</g>

<!-- POPOVER -->
<rect x="660" y="254" width="486" height="313" rx="12" fill="#000" opacity=".3" filter="url(#sh2)"/>
<path d="M901 250L912.700 237L925 250Z" fill="#fff"/>
<rect x="660" y="250" width="486" height="313" rx="12" fill="#fff"/>
<text x="687" y="283" font-size="15" textLength="433" lengthAdjust="spacingAndGlyphs" fill="#3a3a3a">Export the icon for production use. Off-canvas objects are removed</text>
<text x="798.300" y="302" font-size="15" textLength="210" lengthAdjust="spacingAndGlyphs" fill="#3a3a3a">and the SVG is optimised for size</text>
<rect x="759.500" y="326.500" width="135" height="135" rx="7" fill="#fff" stroke="#e2e2e2"/>
<rect x="910.500" y="326.500" width="135" height="135" rx="7" fill="#fff" stroke="#e2e2e2"/>
<svg x="783" y="337.700" width="99.300" height="112" viewBox="233 87 1038 1173"><use href="#docR"/></svg>
<svg x="934" y="337.700" width="99.300" height="112" viewBox="233 87 1038 1173"><use href="#docNsmall"/></svg>
<text x="799.300" y="487" font-size="15" font-weight="700" textLength="51.700" lengthAdjust="spacingAndGlyphs" fill="#3a3a3a">Regular</text>
<text x="951.700" y="487" font-size="15" font-weight="700" textLength="49.600" lengthAdjust="spacingAndGlyphs" fill="#3a3a3a">Nightly</text>
<rect x="759" y="511" width="135" height="34" rx="7" fill="#ebebeb"/>
<rect x="911" y="511" width="133" height="34" rx="7" fill="#ebebeb"/>
<text x="776" y="533" font-size="15" font-weight="700" textLength="100.700" lengthAdjust="spacingAndGlyphs" fill="#333">Save Regular…</text>
<text x="928.300" y="533" font-size="15" font-weight="700" textLength="98.400" lengthAdjust="spacingAndGlyphs" fill="#333">Save Nightly…</text>
</svg>
</body></html>
